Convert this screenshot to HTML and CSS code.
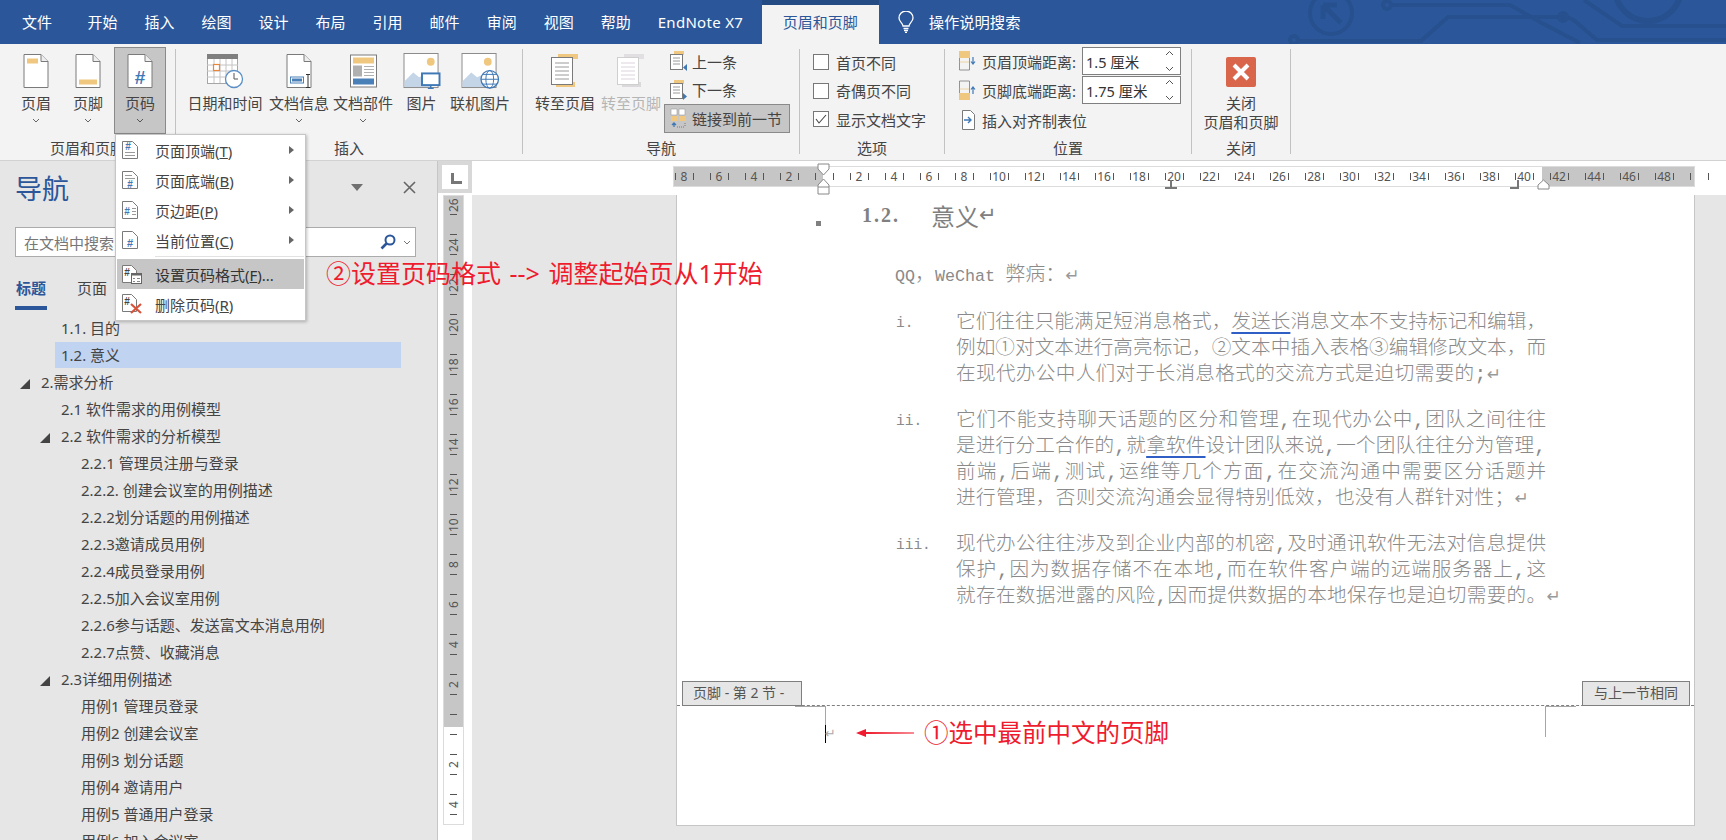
FILE: index.html
```html
<!DOCTYPE html>
<html lang="zh-CN">
<head>
    <meta charset="UTF-8">
    <title>页眉和页脚</title>
    <link rel="stylesheet" href="styles.css">
</head>
<body>
    <!-- Title tabs -->
    <header class="tabbar">
        <div class="tab tab-file">文件</div>
        <div class="tab">开始</div>
        <div class="tab">插入</div>
        <div class="tab">绘图</div>
        <div class="tab">设计</div>
        <div class="tab">布局</div>
        <div class="tab">引用</div>
        <div class="tab">邮件</div>
        <div class="tab">审阅</div>
        <div class="tab">视图</div>
        <div class="tab">帮助</div>
        <div class="tab tab-en">EndNote X7</div>
        <div class="tab tab-active">页眉和页脚</div>
        <div class="tell-me">
            <svg width="18" height="22" viewBox="0 0 18 22" fill="none" stroke="#fff" stroke-width="1.3"><path d="M6 15c0-3-4-4-4-8a7 7 0 0 1 14 0c0 4-4 5-4 8z"/><path d="M6.5 17.5h5M7 19.5h4M8 21.5h2"/></svg>
            <span>操作说明搜索</span>
        </div>
        <svg class="circuit" width="440" height="44" viewBox="0 0 440 44" fill="none" stroke="#27508e" stroke-width="4">
            <circle cx="45" cy="13" r="21"/>
            <path d="M37 5h14M37 5v14M37 5l18 18" stroke-width="5"/>
            <circle cx="101" cy="5" r="4"/>
            <path d="M105 5h119l30 17 40 21"/>
            <circle cx="8" cy="40" r="4"/>
            <path d="M12 41h123l27-24h115c8 0 12 4 20 11l14 12h130"/>
            <circle cx="277" cy="17" r="4"/>
            <circle cx="362" cy="-12" r="33" stroke-width="6"/>
            <path d="M298 0l38 26h104"/>
        </svg>
    </header>

    <!-- Ribbon -->
    <section class="ribbon">
        <div class="group group-hf">
            <div class="group-body">
                <div class="big-btn btn-52">
                    <svg class="big-icon" width="26" height="35" viewBox="0 0 26 35"><path d="M1 1h17l7 7v26H1z" fill="#fff" stroke="#7a7a7a"/><path d="M18 1v7h7" fill="#eee" stroke="#7a7a7a"/><rect x="4" y="5" width="11" height="5" fill="#f0c77e"/></svg>
                    <span class="big-label">页眉</span>
                    <svg class="chev" width="8" height="5" viewBox="0 0 8 5" fill="none" stroke="#666"><path d="M1 1l3 3 3-3"/></svg>
                </div>
                <div class="big-btn btn-52">
                    <svg class="big-icon" width="26" height="35" viewBox="0 0 26 35"><path d="M1 1h17l7 7v26H1z" fill="#fff" stroke="#7a7a7a"/><path d="M18 1v7h7" fill="#eee" stroke="#7a7a7a"/><rect x="4" y="26" width="18" height="5" fill="#f0c77e"/></svg>
                    <span class="big-label">页脚</span>
                    <svg class="chev" width="8" height="5" viewBox="0 0 8 5" fill="none" stroke="#666"><path d="M1 1l3 3 3-3"/></svg>
                </div>
                <div class="big-btn btn-52 btn-selected">
                    <svg class="big-icon" width="26" height="35" viewBox="0 0 26 35"><path d="M1 1h17l7 7v26H1z" fill="#fff" stroke="#7a7a7a"/><path d="M18 1v7h7" fill="#eee" stroke="#7a7a7a"/><text x="13" y="30" text-anchor="middle" font-size="19" font-weight="700" font-family="Liberation Sans" fill="#3f78b5">#</text></svg>
                    <span class="big-label">页码</span>
                    <svg class="chev" width="8" height="5" viewBox="0 0 8 5" fill="none" stroke="#555"><path d="M1 1l3 3 3-3"/></svg>
                </div>
            </div>
            <div class="group-label">页眉和页脚</div>
        </div>
        <div class="sep"></div>

        <div class="group group-insert">
            <div class="group-body">
                <div class="big-btn btn-date">
                    <svg class="big-icon" width="38" height="36" viewBox="0 0 38 36"><rect x="1.500" y="2.500" width="30" height="28" fill="#fff" stroke="#a6a6a6"/><rect x="1" y="1" width="31" height="5" fill="#7f7f7f"/><path d="M1 12h31M1 18h31M1 24h31M8 6v24M14 6v24M20 6v24M26 6v24" stroke="#c4c4c4"/><rect x="7.500" y="11.500" width="6" height="6" fill="#fff" stroke="#e8873a" stroke-width="1.200"/><circle cx="28" cy="26" r="8.500" fill="#fff" stroke="#5a8ec4" stroke-width="1.300"/><path d="M28 20v6h4" fill="none" stroke="#555"/></svg>
                    <span class="big-label">日期和时间</span>
                </div>
                <div class="big-btn btn-64">
                    <svg class="big-icon" width="26" height="35" viewBox="0 0 26 35"><path d="M1 1h17l7 7v26H1z" fill="#fff" stroke="#7a7a7a"/><path d="M18 1v7h7" fill="#eee" stroke="#7a7a7a"/><rect x="4.500" y="23.500" width="13" height="6" fill="#fff" stroke="#4a80b8"/><rect x="6" y="25" width="10" height="3" fill="#4a80b8"/><path d="M20 21h4M22 21v13M20 34h4" fill="none" stroke="#333"/></svg>
                    <span class="big-label">文档信息</span>
                    <svg class="chev" width="8" height="5" viewBox="0 0 8 5" fill="none" stroke="#666"><path d="M1 1l3 3 3-3"/></svg>
                </div>
                <div class="big-btn btn-64">
                    <svg class="big-icon" width="27" height="33" viewBox="0 0 27 33"><rect x=".5" y=".5" width="26" height="32" fill="#fff" stroke="#7a7a7a"/><rect x="3" y="3" width="21" height="6" fill="#f0c77e"/><rect x="3" y="11" width="9" height="11" fill="#b0b0b0"/><path d="M14 12h10M14 15h10M14 18h10M14 21h10" stroke="#b0b0b0"/><rect x="3" y="24" width="21" height="6" fill="#4a80b8"/></svg>
                    <span class="big-label">文档部件</span>
                    <svg class="chev" width="8" height="5" viewBox="0 0 8 5" fill="none" stroke="#666"><path d="M1 1l3 3 3-3"/></svg>
                </div>
                <div class="big-btn btn-pic">
                    <svg class="big-icon" width="38" height="37" viewBox="0 0 38 37"><rect x=".5" y=".5" width="35" height="35" fill="#fff" stroke="#8a8a8a"/><circle cx="28" cy="9" r="4" fill="#f0c77e"/><path d="M1 35V29l9-9 6 5 4-2 8 12z" fill="#c5d5e8"/><rect x="19" y="21" width="18" height="12" fill="#fff" stroke="#3f78b5" stroke-width="2"/><path d="M28 33v3M25 36.500h6" stroke="#3f78b5" stroke-width="1.500"/></svg>
                    <span class="big-label">图片</span>
                </div>
                <div class="big-btn btn-64">
                    <svg class="big-icon" width="39" height="37" viewBox="0 0 39 37"><rect x=".5" y=".5" width="35" height="35" fill="#fff" stroke="#8a8a8a"/><circle cx="27" cy="9" r="4" fill="#f0c77e"/><path d="M1 35V29l9-9 6 5 4-2 8 12z" fill="#c5d5e8"/><circle cx="29" cy="27" r="9" fill="#fff" stroke="#3f78b5" stroke-width="1.300"/><ellipse cx="29" cy="27" rx="4" ry="9" fill="none" stroke="#3f78b5"/><path d="M20 27h18M21.500 22h15M21.500 32h15" stroke="#3f78b5"/></svg>
                    <span class="big-label">联机图片</span>
                </div>
            </div>
            <div class="group-label">插入</div>
        </div>
        <div class="sep"></div>

        <div class="group group-nav">
            <div class="group-body">
                <div class="big-btn btn-goto">
                    <svg class="big-icon" width="28" height="34" viewBox="0 0 28 34"><rect x="7" y="0" width="20" height="5" fill="#f0c77e"/><rect x="5" y="28" width="19" height="5" fill="#f0c77e"/><rect x=".5" y="3.500" width="21" height="27" fill="#fff" stroke="#7a7a7a"/><path d="M4 9h14M4 13h14M4 17h14M4 21h14M4 25h14" stroke="#9a9a9a"/></svg>
                    <span class="big-label">转至页眉</span>
                </div>
                <div class="big-btn btn-gotof">
                    <svg class="big-icon" width="28" height="34" viewBox="0 0 28 34"><rect x="7" y="0" width="20" height="5" fill="#e2dfe2"/><rect x="5" y="28" width="19" height="5" fill="#dcd9dc"/><rect x=".5" y="3.500" width="21" height="27" fill="#fff" stroke="#cfcfcf"/><path d="M4 9h14M4 13h14M4 17h14M4 21h14M4 25h14" stroke="#dcd3dc"/></svg>
                    <span class="big-label label-off">转至页脚</span>
                </div>
                <div class="small-col">
                    <div class="small-row">
                        <svg width="20" height="22" viewBox="0 0 20 22"><rect x="6" y="1" width="10" height="4" fill="#f0c77e"/><rect x="2.500" y="4.500" width="12" height="15" fill="#fff" stroke="#7a7a7a"/><path d="M5 8h7M5 11h7M5 14h7" stroke="#9a9a9a"/><path d="M19 14v7l-4-3.500z" fill="#3f78b5"/></svg>
                        <span>上一条</span>
                    </div>
                    <div class="small-row">
                        <svg width="20" height="22" viewBox="0 0 20 22"><rect x="6" y="1" width="10" height="4" fill="#f0c77e"/><rect x="2.500" y="4.500" width="12" height="15" fill="#fff" stroke="#7a7a7a"/><path d="M5 8h7M5 11h7M5 14h7" stroke="#9a9a9a"/><path d="M15 14v7l4-3.500z" fill="#3f78b5"/></svg>
                        <span>下一条</span>
                    </div>
                    <div class="small-row row-on">
                        <svg width="20" height="20" viewBox="0 0 20 20"><path d="M3 1h6v6H3zM11 1h6v6h-6z" fill="#fff" stroke="#9a9a9a" stroke-width=".6"/><rect x="3" y="8" width="7" height="5" fill="#f0c77e"/><rect x="11" y="8" width="7" height="5" fill="#f0c77e"/><path d="M6 19v-4M4 17l2-2 2 2" fill="none" stroke="#3f78b5" stroke-width="1.300"/><path d="M9 19h8M17 15v4" stroke="#7a7a7a" stroke-dasharray="1 1"/></svg>
                        <span>链接到前一节</span>
                    </div>
                </div>
            </div>
            <div class="group-label">导航</div>
        </div>
        <div class="sep"></div>

        <div class="group group-opts">
            <div class="group-body opts-body">
                <label class="check-row"><span class="check"></span>首页不同</label>
                <label class="check-row"><span class="check"></span>奇偶页不同</label>
                <label class="check-row"><span class="check"><svg width="12" height="10" viewBox="0 0 12 10" fill="none" stroke="#444" stroke-width="1.100"><path d="M1 5l3 4 7-8"/></svg></span>显示文档文字</label>
            </div>
            <div class="group-label">选项</div>
        </div>
        <div class="sep"></div>

        <div class="group group-pos">
            <div class="group-body pos-body">
                <div class="pos-row">
                    <svg width="17" height="20" viewBox="0 0 17 20"><rect x="0" y="0" width="11" height="7" fill="#f0c77e"/><path d="M.5 7v12h10V7" fill="none" stroke="#7a7a7a" stroke-width=".8"/><path d="M.5 11h10" stroke="#e8b45a" stroke-dasharray="1 1"/><path d="M14 6v7M12 10.500l2 2.500 2-2.500" fill="none" stroke="#3f78b5" stroke-width="1.200"/></svg>
                    <span class="pos-label">页眉顶端距离:</span>
                    <div class="spin"><span>1.5 厘米</span><i class="spin-arrows"><svg width="9" height="22" viewBox="0 0 9 22" fill="none" stroke="#555"><path d="M1 5l3.500-3.500L8 5M1 17l3.500 3.500L8 17"/></svg></i></div>
                </div>
                <div class="pos-row">
                    <svg width="17" height="20" viewBox="0 0 17 20"><rect x="0" y="13" width="11" height="7" fill="#f0c77e"/><path d="M.5 13V1h10v12" fill="none" stroke="#7a7a7a" stroke-width=".8"/><path d="M.5 9h10" stroke="#e8b45a" stroke-dasharray="1 1"/><path d="M14 14V7M12 9.500L14 7l2 2.500" fill="none" stroke="#3f78b5" stroke-width="1.200"/></svg>
                    <span class="pos-label">页脚底端距离:</span>
                    <div class="spin"><span>1.75 厘米</span><i class="spin-arrows"><svg width="9" height="22" viewBox="0 0 9 22" fill="none" stroke="#555"><path d="M1 5l3.500-3.500L8 5M1 17l3.500 3.500L8 17"/></svg></i></div>
                </div>
                <div class="pos-row pos-tab">
                    <svg width="17" height="22" viewBox="0 0 17 22"><path d="M3.500 1.500h8l4 4v15h-12z" fill="#fff" stroke="#7a7a7a"/><path d="M5 11h6M9 8l3 3-3 3" fill="none" stroke="#3f78b5" stroke-width="1.400"/></svg>
                    <span>插入对齐制表位</span>
                </div>
            </div>
            <div class="group-label">位置</div>
        </div>
        <div class="sep"></div>

        <div class="group group-close">
            <div class="group-body">
                <div class="big-btn close-btn">
                    <span class="close-icon"><svg width="18" height="18" viewBox="0 0 18 18" stroke="#fff" stroke-width="4"><path d="M2 2l14 14M16 2L2 16"/></svg></span>
                    <span class="big-label">关闭<br>页眉和页脚</span>
                </div>
            </div>
            <div class="group-label">关闭</div>
        </div>
        <div class="sep"></div>
    </section>

    <div class="workspace">
        <!-- Navigation pane -->
        <aside class="nav">
            <div class="nav-head">
                <h2>导航</h2>
                <span class="nav-drop"></span>
                <svg class="nav-close" width="13" height="13" viewBox="0 0 13 13" stroke="#666" stroke-width="1.600"><path d="M1 1l11 11M12 1L1 12"/></svg>
            </div>
            <div class="nav-search">
                <span>在文档中搜索</span>
                <svg width="16" height="16" viewBox="0 0 16 16" fill="none" stroke="#2b579a" stroke-width="2"><circle cx="10" cy="6" r="4.500"/><path d="M6.500 9.500L1.500 14.500" stroke-width="2.600"/></svg>
                <svg class="search-chev" width="8" height="5" viewBox="0 0 8 5" fill="none" stroke="#777"><path d="M1 1l3 3 3-3"/></svg>
            </div>
            <div class="nav-tabs">
                <span class="nav-tab nav-tab-on">标题</span>
                <span class="nav-tab">页面</span>
            </div>
            <div class="tree">
                <div class="row lv1">1.1. 目的</div>
                <div class="row row-cur">1.2. 意义</div>
                <div class="row lv0"><i class="tri"></i>2.需求分析</div>
                <div class="row lv1">2.1 软件需求的用例模型</div>
                <div class="row lv1t"><i class="tri"></i>2.2 软件需求的分析模型</div>
                <div class="row lv2">2.2.1 管理员注册与登录</div>
                <div class="row lv2">2.2.2. 创建会议室的用例描述</div>
                <div class="row lv2">2.2.2划分话题的用例描述</div>
                <div class="row lv2">2.2.3邀请成员用例</div>
                <div class="row lv2">2.2.4成员登录用例</div>
                <div class="row lv2">2.2.5加入会议室用例</div>
                <div class="row lv2">2.2.6参与话题、发送富文本消息用例</div>
                <div class="row lv2">2.2.7点赞、收藏消息</div>
                <div class="row lv1t"><i class="tri"></i>2.3详细用例描述</div>
                <div class="row lv2">用例1 管理员登录</div>
                <div class="row lv2">用例2 创建会议室</div>
                <div class="row lv2">用例3 划分话题</div>
                <div class="row lv2">用例4 邀请用户</div>
                <div class="row lv2">用例5 普通用户登录</div>
                <div class="row lv2">用例6 加入会议室</div>
            </div>
        </aside>

        <main class="doc-area">
            <div class="ruler-row">
                <div class="ruler-corner"><span class="corner-mark"></span></div>
                <div class="hruler">
                    <span class="first">8</span><span>6</span><span>4</span><span>2</span><span></span><span>2</span><span>4</span><span>6</span><span>8</span><span>10</span><span>12</span><span>14</span><span>16</span><span>18</span><span>20</span><span>22</span><span>24</span><span>26</span><span>28</span><span>30</span><span>32</span><span>34</span><span>36</span><span>38</span><span>40</span><span>42</span><span>44</span><span>46</span><span>48</span><span></span>
                    <svg class="handle handle-left" width="13" height="32" viewBox="0 0 13 32" fill="#fff" stroke="#888"><path d="M1 1h11v5l-5.500 6L1 6z"/><path d="M6.500 16L12 22v9H1v-9z"/><path d="M1 24h11"/></svg>
                    <svg class="handle handle-tab" width="12" height="9" viewBox="0 0 12 9" fill="none" stroke="#777" stroke-width="2"><path d="M6 0v7M0 8h12"/></svg>
                    <svg class="handle handle-end" width="9" height="9" viewBox="0 0 9 9" fill="none" stroke="#777" stroke-width="2"><path d="M8 0v8H0"/></svg>
                    <svg class="handle handle-right" width="13" height="11" viewBox="0 0 13 11" fill="#fff" stroke="#888"><path d="M6.500 1L12 6v4H1V6z"/></svg>
                </div>
            </div>
            <div class="doc-row">
                <div class="vruler-col">
                    <div class="vruler">
                        <span>26</span><span>24</span><span>22</span><span>20</span><span>18</span><span>16</span><span>14</span><span>12</span><span>10</span><span>8</span><span>6</span><span>4</span><span>2</span><span></span><span>2</span><span>4</span>
                    </div>
                </div>
                <div class="canvas">
                    <article class="page">
                        <div class="doc-heading">
                            <i class="para-dot"></i>
                            <span class="h-num">1.2.</span>
                            <span class="h-text">意义</span><span class="ret ret-big">↵</span>
                        </div>
                        <p class="doc-intro"><span class="lat">QQ</span>，<span class="lat">WeChat </span>弊病：<span class="ret">↵</span></p>
                        <div class="doc-list">
                            <div class="doc-item">
                                <span class="marker">i.</span>
                                <div class="lines">
                                    <div>它们往往只能满足短消息格式，<u>发送长</u>消息文本不支持标记和编辑，</div>
                                    <div>例如①对文本进行高亮标记，②文本中插入表格③编辑修改文本，而</div>
                                    <div class="last">在现代办公中人们对于长消息格式的交流方式是迫切需要的;<span class="ret">↵</span></div>
                                </div>
                            </div>
                            <div class="doc-item">
                                <span class="marker">ii.</span>
                                <div class="lines">
                                    <div>它们不能支持聊天话题的区分和管理,在现代办公中,团队之间往往</div>
                                    <div>是进行分工合作的,就<u>拿软件</u>设计团队来说,一个团队往往分为管理,</div>
                                    <div>前端,后端,测试,运维等几个方面,在交流沟通中需要区分话题并</div>
                                    <div class="last">进行管理，否则交流沟通会显得特别低效，也没有人群针对性；<span class="ret">↵</span></div>
                                </div>
                            </div>
                            <div class="doc-item">
                                <span class="marker">iii.</span>
                                <div class="lines">
                                    <div>现代办公往往涉及到企业内部的机密,及时通讯软件无法对信息提供</div>
                                    <div>保护,因为数据存储不在本地,而在软件客户端的远端服务器上,这</div>
                                    <div class="last">就存在数据泄露的风险,因而提供数据的本地保存也是迫切需要的。<span class="ret">↵</span></div>
                                </div>
                            </div>
                        </div>
                        <div class="doc-footer">
                            <div class="foot-head">
                                <span class="foot-tag tag-left">页脚 - 第 2 节 -</span>
                                <span class="foot-tag tag-right">与上一节相同</span>
                            </div>
                            <div class="foot-body">
                                <div class="crop crop-left">
                                    <i class="cursor"></i>
                                    <span class="ret ret-foot">↵</span>
                                </div>
                                <div class="crop crop-right"></div>
                            </div>
                        </div>
                    </article>
                </div>
            </div>
        </main>
    </div>

    <!-- Page number dropdown -->
    <div class="menu">
        <div class="menu-item">
            <svg width="16" height="18" viewBox="0 0 16 18"><path d="M.5.5h10l5 5v12H.5z" fill="#fff" stroke="#7a7a7a"/><text x="6" y="9" text-anchor="middle" font-size="10" font-weight="700" font-family="Liberation Sans" fill="#3f78b5">#</text><path d="M3 11.500h10M3 14.500h10" stroke="#9a9a9a"/></svg>
            <span class="menu-text">页面顶端(<u>T</u>)</span><i class="menu-arrow"></i>
        </div>
        <div class="menu-item">
            <svg width="16" height="18" viewBox="0 0 16 18"><path d="M.5.5h10l5 5v12H.5z" fill="#fff" stroke="#7a7a7a"/><path d="M3 4.500h7M3 7.500h10" stroke="#9a9a9a"/><text x="8" y="17" text-anchor="middle" font-size="10" font-weight="700" font-family="Liberation Sans" fill="#3f78b5">#</text></svg>
            <span class="menu-text">页面底端(<u>B</u>)</span><i class="menu-arrow"></i>
        </div>
        <div class="menu-item">
            <svg width="16" height="18" viewBox="0 0 16 18"><path d="M.5.5h10l5 5v12H.5z" fill="#fff" stroke="#7a7a7a"/><text x="5" y="14" text-anchor="middle" font-size="10" font-weight="700" font-family="Liberation Sans" fill="#3f78b5">#</text><path d="M10 7.500h4M10 10.500h4M10 13.500h4" stroke="#9a9a9a"/></svg>
            <span class="menu-text">页边距(<u>P</u>)</span><i class="menu-arrow"></i>
        </div>
        <div class="menu-item">
            <svg width="16" height="18" viewBox="0 0 16 18"><path d="M.5.5h10l5 5v12H.5z" fill="#fff" stroke="#7a7a7a"/><text x="8" y="16" text-anchor="middle" font-size="11" font-weight="700" font-family="Liberation Sans" fill="#3f78b5">#</text></svg>
            <span class="menu-text">当前位置(<u>C</u>)</span><i class="menu-arrow"></i>
        </div>
        <div class="menu-sep"></div>
        <div class="menu-item menu-hover">
            <svg width="20" height="19" viewBox="0 0 20 19"><path d="M.5.5h9l5 5v7h-4v5h-10z" fill="#fff" stroke="#7a7a7a"/><text x="5" y="11" text-anchor="middle" font-size="10" font-weight="700" font-family="Liberation Sans" fill="#444">#</text><rect x="9.500" y="8.500" width="10" height="10" fill="#fff" stroke="#666"/><rect x="9.500" y="8.500" width="10" height="2" fill="#666"/><path d="M11 13.500h2M15 13.500h3M11 16.500h2M15 16.500h3" stroke="#888"/></svg>
            <span class="menu-text">设置页码格式(<u>F</u>)...</span>
        </div>
        <div class="menu-item">
            <svg width="20" height="20" viewBox="0 0 20 20"><path d="M.5.5h9l5 5v12h-14z" fill="#fff" stroke="#7a7a7a"/><text x="5" y="11" text-anchor="middle" font-size="10" font-weight="700" font-family="Liberation Sans" fill="#444">#</text><path d="M9 10l10 9M19 10L9 19" stroke="#d9533a" stroke-width="2.200"/></svg>
            <span class="menu-text">删除页码(<u>R</u>)</span>
        </div>
    </div>

    <!-- Red notes drawn on top of the screenshot -->
    <div class="note note-two">②设置页码格式 --&gt; 调整起始页从1开始</div>
    <svg class="note-arrow" width="58" height="12" viewBox="0 0 58 12"><path d="M0 6l10-4v3l48 .5v1L10 7v3z" fill="#ee1c2e"/></svg>
    <div class="note note-one">①选中最前中文的页脚</div>
</body>
</html>
```

FILE: styles.css
```css
* {
    box-sizing: border-box;
}

body {
    margin: 0;
    width: 1726px;
    height: 840px;
    overflow: hidden;
    position: relative;
    display: flex;
    flex-direction: column;
    font-family: "Noto Sans", "Noto Sans CJK SC", sans-serif;
    color: #444;
    background: #e6e6e6;
}

svg {
    display: block;
    flex: none;
}

/* Title tabs */
.tabbar {
    height: 44px;
    flex: none;
    display: flex;
    position: relative;
    overflow: hidden;
    background: #2b579a;
    color: #fff;
    font-size: 15px;
    line-height: 44px;
}

.tab {
    padding: 0 13.5px;
    white-space: nowrap;
}

.tab-file {
    padding: 0 22px 0 22px;
}

.tab-en {
    letter-spacing: .3px;
}

.tab-active {
    margin-left: 5px;
    padding: 0 21px;
    background: #f3f3f3;
    color: #2b579a;
    border-top: 5px solid #254b85;
    line-height: 34px;
}

.tell-me {
    display: flex;
    align-items: center;
    gap: 14px;
    margin-left: 18px;
    font-size: 15.300px;
}

.circuit {
    position: absolute;
    left: 1286px;
    top: 0;
}

/* Ribbon */
.ribbon {
    height: 117px;
    flex: none;
    display: flex;
    background: #f3f3f3;
    border-bottom: 1px solid #d2d2d2;
    font-size: 15px;
    color: #444;
}

.sep {
    width: 1px;
    flex: none;
    margin: 5px 0 6px;
    background: #c2c2c2;
}

.group {
    flex: none;
    display: flex;
    flex-direction: column;
}

.group-body {
    height: 90px;
    margin-top: 3px;
    display: flex;
}

.group-label {
    text-align: center;
    font-size: 15px;
    line-height: 24px;
}

.group-hf { width: 175px; }
.group-hf .group-body { padding-left: 10px; }
.group-insert { width: 346px; }
.group-insert .group-body { padding-left: 7px; }
.group-nav { width: 276px; }
.group-nav .group-body { padding-left: 9px; }
.group-opts { width: 144px; }
.group-pos { width: 246px; }
.group-close { width: 98px; }

.big-btn {
    height: 87px;
    flex: none;
    display: flex;
    flex-direction: column;
    align-items: center;
    padding-top: 6px;
    border: 1px solid transparent;
}

.big-icon {
    height: 36px;
    margin-top: -1px;
}

.big-label {
    margin-top: 4px;
    line-height: 20px;
    white-space: nowrap;
    text-align: center;
}

.label-off {
    color: #b5b5b5;
}

.chev {
    margin-top: 5px;
}

.btn-52 { width: 52px; }
.btn-64 { width: 64px; }
.btn-pic { width: 53px; }
.btn-date { width: 84px; }
.btn-goto { width: 66px; }
.btn-gotof { width: 66px; }

.btn-selected {
    background: #c6c6c6;
    border-color: #8a8a8a;
}

.small-col {
    width: 126px;
    margin-left: 0;
}

.small-row {
    height: 28.500px;
    display: flex;
    align-items: center;
    gap: 4px;
    padding-left: 4px;
    white-space: nowrap;
}

.row-on {
    background: #c6c6c6;
    border: 1px solid #8a8a8a;
    padding-left: 3px;
}

.opts-body {
    flex-direction: column;
    padding-left: 13px;
    padding-top: 1px;
}

.check-row {
    height: 28.500px;
    display: flex;
    align-items: center;
    gap: 7px;
}

.check {
    width: 16px;
    height: 16px;
    display: flex;
    align-items: center;
    justify-content: center;
    background: #fff;
    border: 1px solid #777;
}

.pos-body {
    flex-direction: column;
    padding-left: 14px;
}

.pos-row {
    display: flex;
    align-items: center;
    height: 28px;
    margin-bottom: 1px;
    white-space: nowrap;
}

.pos-label {
    width: 100px;
    margin-left: 6px;
}

.pos-tab {
    margin-top: 1px;
    gap: 6px;
}

.spin {
    width: 99px;
    height: 28px;
    display: flex;
    align-items: center;
    justify-content: space-between;
    padding: 0 6px 0 3px;
    background: #fff;
    border: 1px solid #7f7f7f;
    color: #333;
    font-size: 14.500px;
}

.close-btn {
    width: 98px;
    padding-top: 9px;
}

.close-icon {
    width: 30px;
    height: 30px;
    flex: none;
    display: flex;
    align-items: center;
    justify-content: center;
    background: #d9654a;
    border-radius: 2px;
}

.close-btn .big-label {
    margin-top: 7px;
    line-height: 19px;
}

/* Workspace */
.workspace {
    flex: 1;
    display: flex;
    min-height: 0;
}

.nav {
    width: 438px;
    flex: none;
    overflow: hidden;
    background: #e6e6e6;
    border-right: 1px solid #c6c6c6;
}

.nav-head {
    height: 58px;
    display: flex;
    align-items: center;
    padding: 0 21px 6px 15px;
}

.nav-head h2 {
    margin: 0;
    font-size: 27px;
    font-weight: 400;
    color: #2b579a;
}

.nav-drop {
    margin-left: auto;
    border-left: 6px solid transparent;
    border-right: 6px solid transparent;
    border-top: 7px solid #707070;
}

.nav-close {
    margin-left: 40px;
}

.nav-search {
    height: 30px;
    margin: 8px 21px 0 15px;
    display: flex;
    align-items: center;
    padding: 0 4px 0 8px;
    background: #fff;
    border: 1px solid #ababab;
    color: #777;
    font-size: 15px;
}

.nav-search span {
    flex: 1;
}

.search-chev {
    margin-left: 7px;
}

.nav-tabs {
    margin: 16px 0 0 15px;
    display: flex;
    gap: 29px;
    font-size: 15px;
}

.nav-tab {
    width: 32px;
    text-align: center;
    line-height: 30px;
    padding-bottom: 3px;
    border-bottom: 4px solid transparent;
    white-space: nowrap;
}

.nav-tab-on {
    color: #2b579a;
    font-weight: 700;
    border-bottom-color: #2b579a;
}

.tree {
    margin-top: 5px;
    font-size: 15px;
    color: #444;
}

.row {
    height: 27px;
    line-height: 26px;
    white-space: nowrap;
}

.lv0 { padding-left: 20px; }
.lv1 { padding-left: 61px; }
.lv1t { padding-left: 40px; }
.lv2 { padding-left: 81px; }

.row-cur {
    width: 346px;
    height: 26px;
    margin: 0 0 1px 55px;
    padding-left: 6px;
    background: #c0d3f1;
}

.tri {
    display: inline-block;
    width: 21px;
    height: 10px;
    vertical-align: -1px;
    position: relative;
}

.tri::before {
    content: "";
    position: absolute;
    left: 0;
    top: 0;
    border-left: 10px solid transparent;
    border-bottom: 10px solid #444;
}

/* Rulers */
.doc-area {
    flex: 1;
    display: flex;
    flex-direction: column;
    min-width: 0;
}

.ruler-row {
    height: 34px;
    flex: none;
    display: flex;
    background: #fff;
}

.ruler-corner {
    width: 34px;
    height: 32px;
    flex: none;
    padding: 4px;
    background: #d8d8d8;
}

.corner-mark {
    display: block;
    height: 100%;
    background: #fff;
    position: relative;
}

.corner-mark::before {
    content: "";
    position: absolute;
    left: 9px;
    top: 8px;
    width: 8px;
    height: 8px;
    border-left: 3px solid #777;
    border-bottom: 3px solid #777;
}

.hruler {
    width: 1022px;
    height: 21px;
    flex: none;
    margin: 5px 0 0 201px;
    position: relative;
    display: flex;
    background: linear-gradient(90deg, #c6c6c6 150px, #fff 150px, #fff 869px, #c6c6c6 869px);
    box-shadow: inset 0 0 0 1px #dcdcdc;
    font-size: 12px;
    line-height: 21px;
    color: #555;
}

.hruler > span {
    width: 35px;
    flex: none;
    text-align: center;
    background:
        linear-gradient(#555, #555) 8.5px 7px / 1px 7px no-repeat,
        linear-gradient(#555, #555) 26px 7px / 1px 7px no-repeat;
}

.hruler > .first {
    margin-left: -6.500px;
}

.handle {
    position: absolute;
}

.handle-left { left: 144px; top: -3px; }
.handle-tab { left: 492px; top: 14px; }
.handle-end { left: 837px; top: 14px; }
.handle-right { left: 864px; top: 13px; }

.doc-row {
    flex: 1;
    display: flex;
    min-height: 0;
}

.vruler-col {
    width: 34px;
    flex: none;
    padding-left: 5px;
    background: #fff;
}

.vruler {
    width: 21px;
    height: 630px;
    overflow: hidden;
    background: linear-gradient(#c6c6c6 532px, #fff 532px);
    box-shadow: inset 0 0 0 1px #dcdcdc;
    font-size: 12px;
    color: #555;
}

.vruler span {
    display: block;
    width: 21px;
    height: 40px;
    line-height: 21px;
    text-align: center;
    writing-mode: vertical-rl;
    transform: rotate(180deg);
    background:
        linear-gradient(#555, #555) 7px 10px / 7px 1px no-repeat,
        linear-gradient(#555, #555) 7px 30px / 7px 1px no-repeat;
}

.vruler span:first-child {
    margin-top: -10px;
}

/* Page */
.canvas {
    flex: 1;
    padding-left: 204px;
    background: #e6e6e6;
}

.page {
    width: 1019px;
    height: 631px;
    display: flex;
    flex-direction: column;
    background: #fff;
    border: 1px solid #c6c6c6;
    border-top: 0;
    color: #8a8a8a;
    font-family: "Liberation Mono", "Noto Sans CJK SC", monospace;
    font-weight: 300;
}

.doc-heading {
    height: 40px;
    flex: none;
    display: flex;
    align-items: center;
    padding-left: 139px;
    color: #808080;
}

.para-dot {
    width: 5px;
    height: 5px;
    flex: none;
    margin: 16px 41px 0 0;
    background: #808080;
}

.h-num {
    width: 69px;
    font-size: 20px;
    font-weight: 700;
    font-family: "Liberation Serif", serif;
    letter-spacing: 2px;
}

.h-text {
    font-size: 24px;
    font-weight: 400;
}

.ret {
    font-family: "DejaVu Sans", sans-serif;
    font-size: 17px;
    font-weight: 400;
    line-height: 0;
    color: #999;
}

.ret-big {
    font-size: 21px;
    color: #808080;
}

.doc-intro {
    margin: 24px 0 0 218px;
    flex: none;
    font-size: 20px;
    line-height: 34px;
}

.lat {
    font-size: 16.700px;
}

.doc-list {
    margin: 15.500px 0 0 219px;
    flex: none;
}

.doc-item {
    display: flex;
    margin-bottom: 20px;
}

.marker {
    width: 60px;
    flex: none;
    font-size: 14.500px;
    line-height: 26px;
}

.lines {
    width: 590px;
    flex: none;
    font-size: 19.600px;
    line-height: 26px;
}

.lines > div {
    height: 26px;
    white-space: nowrap;
    text-align: justify;
    text-align-last: justify;
}

.lines > .last {
    text-align-last: left;
    letter-spacing: .35px;
}

.lines u {
    text-decoration: underline #2f5fc4 2px;
    text-underline-offset: 4px;
}

.doc-footer {
    margin-top: auto;
    height: 144px;
    flex: none;
    font-family: "Noto Sans", "Noto Sans CJK SC", sans-serif;
    font-weight: 400;
}

.foot-head {
    height: 25px;
    display: flex;
    justify-content: space-between;
    padding: 0 4px 0 5px;
    border-bottom: 1px dashed #7f7f7f;
}

.foot-tag {
    height: 25px;
    padding: 0 10px;
    background: #e6e6e6;
    border: 1px solid #7f7f7f;
    font-size: 14px;
    line-height: 22px;
    color: #555;
    white-space: nowrap;
}

.tag-left { width: 120px; }
.tag-right { width: 108px; text-align: center; padding: 0; }

.foot-body {
    display: flex;
    padding-left: 118px;
}

.crop {
    width: 31px;
    height: 31px;
    position: relative;
    border-top: 1px solid #a6a6a6;
}

.crop-left {
    border-right: 1px solid #a6a6a6;
}

.crop-right {
    margin-left: 719px;
    border-left: 1px solid #a6a6a6;
}

.cursor {
    position: absolute;
    left: 30px;
    top: 18px;
    width: 1px;
    height: 18px;
    background: #000;
}

.ret-foot {
    position: absolute;
    left: 30px;
    top: 27px;
    font-size: 13px;
    color: #aaa;
}

/* Dropdown */
.menu {
    position: absolute;
    left: 115px;
    top: 134px;
    width: 191px;
    height: 187px;
    padding: 0 1px;
    background: #fff;
    border: 1px solid #c6c6c6;
    box-shadow: 1px 1px 3px rgba(0, 0, 0, 0.25);
    font-size: 15px;
    color: #444;
}

.menu-item {
    height: 30px;
    display: flex;
    align-items: center;
    padding: 0 6px 0 5px;
    position: relative;
}

.menu-text {
    position: absolute;
    left: 38px;
    white-space: nowrap;
}

.menu-arrow {
    position: absolute;
    left: 172px;
    border-left: 5px solid #666;
    border-top: 4.500px solid transparent;
    border-bottom: 4.500px solid transparent;
}

.menu-sep {
    height: 1px;
    margin: 1px 0 2px 38px;
    background: #e2e2e2;
}

.menu-hover {
    background: #c6c6c6;
    color: #333;
}

/* Red notes */
.note {
    position: absolute;
    color: #ee1c2e;
    font-size: 24.500px;
    line-height: 32px;
    white-space: nowrap;
}

.note-two {
    left: 326px;
    top: 257px;
    font-size: 25px;
    word-spacing: 2px;
}

.note-one {
    left: 924px;
    top: 717px;
}

.note-arrow {
    position: absolute;
    left: 856px;
    top: 727px;
}
```
